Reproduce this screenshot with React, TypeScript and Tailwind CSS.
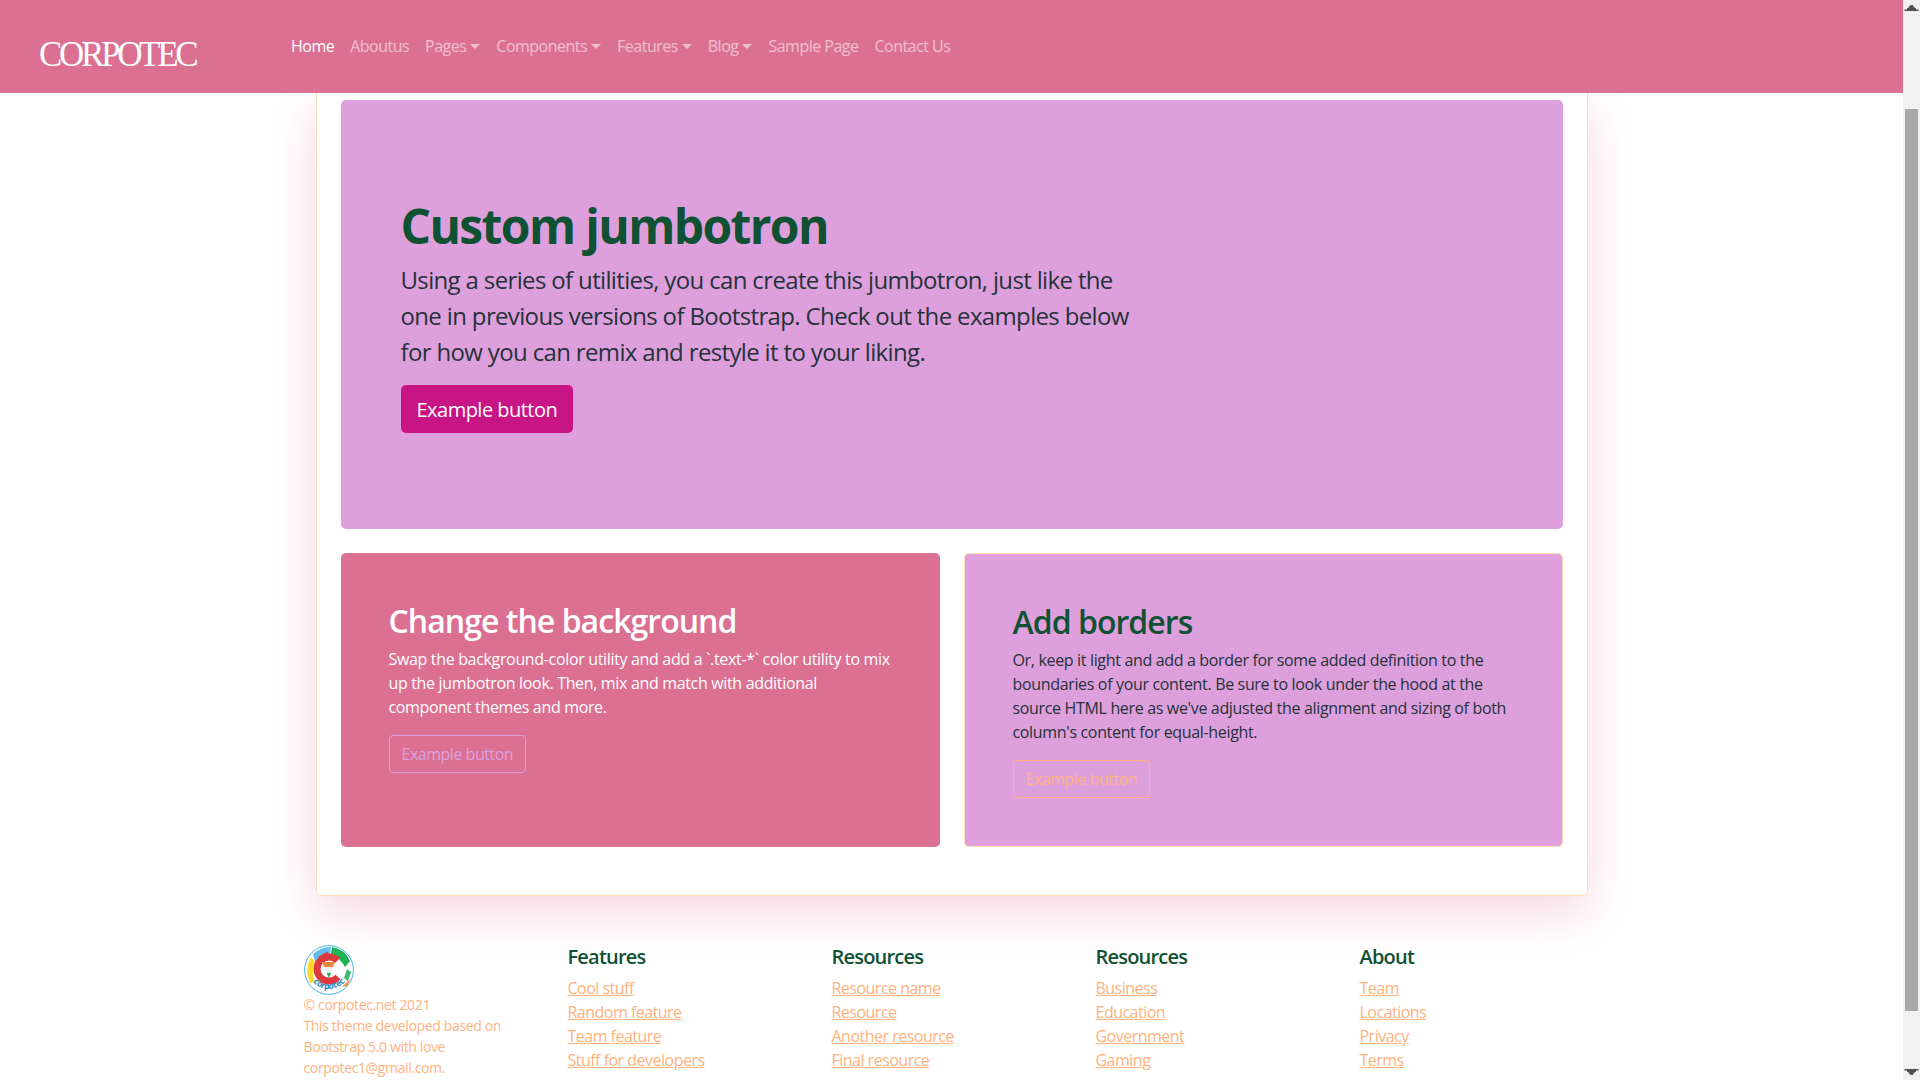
import React from "react";

const links = [
  ["Features", "Cool stuff", "Random feature", "Team feature", "Stuff for developers"],
  ["Resources", "Resource name", "Resource", "Another resource", "Final resource"],
  ["Resources", "Business", "Education", "Government", "Gaming"],
  ["About", "Team", "Locations", "Privacy", "Terms"],
];

function Caret() {
  return <span className="ml-[4px] inline-block align-[3px] border-x-[5px] border-t-[5px] border-x-transparent border-t-current" />;
}

function NavLink({ label, caret, active }: { label: string; caret?: boolean; active?: boolean }) {
  return (
    <a className={"px-2 py-2 leading-6 whitespace-nowrap " + (active ? "text-white" : "text-white/55")}>
      {label}
      {caret && <Caret />}
    </a>
  );
}

function Logo() {
  return (
    <svg width="50" height="50" viewBox="0 0 50 50" className="block">
      <defs>
        <path id="arc" d="M9 37 Q24 52 44 35" />
      </defs>
      <circle cx="25" cy="25" r="24.4" fill="#fff" stroke="#45b4e4" strokeWidth="1" />
      <path d="M9 9 Q17 2 27 2 L26 9 Q16 10 11 17 Z" fill="#62bdf0" />
      <path d="M7 12 Q0 24 6 38 L11 37 Q7 26 11 17 Z" fill="#fbd92e" />
      <path d="M28 2 Q41 4 46 16 L41 22 Q36 13 27 9 Z" fill="#1fb257" />
      <path d="M43 24 L47 27 L44 36 L40 33 Z" fill="#3dbb72" />
      <path d="M38 42 L47 33 L43 41 Z" fill="#ef8f3a" />
      <path d="M34 32 A12 12 0 1 1 33.5 15.5" fill="none" stroke="#dc3a3e" strokeWidth="7" />
      <path d="M15 13 L24 8" stroke="#dc3a3e" strokeWidth="3" />
      <path d="M18 17 H31 L25 33 Z" fill="#e8eef0" />
      <path d="M18 17 H31 L29 22 H20 Z" fill="#f0883a" />
      <path d="M22.5 28 H27 L25 33 Z" fill="#2aa85a" />
      <text fontSize="8.5" fontWeight="700" fill="#1f86c0" fontFamily="'Open Sans',sans-serif" letterSpacing="-0.2">
        <textPath href="#arc">corpotec</textPath>
      </text>
    </svg>
  );
}

function Arrow({ down }: { down?: boolean }) {
  return (
    <svg width="17" height="17" viewBox="0 0 17 17" className="block" fill="#505050">
      {down ? <path d="M1.5 6 H15.5 V7.5 H13 V9 H11.5 V10.5 H10 V12 H7 V10.5 H5.5 V9 H4 V7.5 H1.5 Z" /> : <path d="M1.5 11 H15.5 V9.5 H13 V8 H11.5 V6.5 H10 V5 H7 V6.5 H5.5 V8 H4 V9.5 H1.5 Z" />}
    </svg>
  );
}

export default function App() {
  return (
    <div className="flex h-screen w-full overflow-hidden bg-white font-['Open_Sans',sans-serif] text-[#253238] tracking-[-0.021em]">
      <div className="flex min-w-0 flex-1 flex-col overflow-hidden">
        <nav className="relative z-10 flex h-[93px] shrink-0 items-start bg-[#db7093] pl-[39px]">
          <div className="mt-[35px] w-[244px] shrink-0 font-['Liberation_Serif',serif] text-[35px] leading-10 tracking-[-0.095em] text-white">
            CORPOTEC
          </div>
          <div className="mt-[26px] flex text-[16px] tracking-[-0.032em]">
            <NavLink label="Home" active />
            <NavLink label="Aboutus" />
            <NavLink label="Pages" caret />
            <NavLink label="Components" caret />
            <NavLink label="Features" caret />
            <NavLink label="Blog" caret />
            <NavLink label="Sample Page" />
            <NavLink label="Contact Us" />
          </div>
        </nav>

        <main className="mx-auto w-[1272px] shrink-0">
          <div className="rounded-b-[5px] border border-t-0 border-[#ffdab9] bg-white px-6 pb-12 pt-[7px] shadow-[0_16px_48px_rgba(219,112,147,0.28)]">
            <section className="mb-6 rounded-[5px] bg-[#dda0dd] px-[60px] py-24">
              <h1 className="mt-px text-[48px] font-bold leading-[58px] tracking-[-0.034em] text-[#0f5132]">Custom jumbotron</h1>
              <p className="mb-[15px] mt-[7px] w-[744px] text-[24px] leading-9 tracking-[-0.027em]">
                Using a series of utilities, you can create this jumbotron, just like the one in previous versions of Bootstrap. Check out the examples below for how you can remix and restyle it to your liking.
              </p>
              <button className="h-12 rounded-[5px] bg-[#c71585] px-4 pt-px text-[20px] tracking-[-0.026em] text-white">Example button</button>
            </section>
            <div className="grid grid-cols-2 gap-6">
              <section className="h-[294px] rounded-[5px] bg-[#db7093] p-12 text-white">
                <h2 className="pt-px text-[32px] font-semibold leading-[37px] tracking-[-0.03em]">Change the background</h2>
                <p className="mb-4 mt-2 leading-6">
                  Swap the background-color utility and add a `.text-*` color utility to mix up the jumbotron look. Then, mix and match with additional component themes and more.
                </p>
                <button className="h-[38px] rounded-[4px] border border-[#dda0dd] px-3 tracking-[-0.03em] text-[#dda0dd]">Example button</button>
              </section>
              <section className="h-[294px] rounded-[5px] border border-[#ffdab9] bg-[#dda0dd] p-12">
                <h2 className="pt-px text-[32px] font-semibold leading-[37px] tracking-[-0.03em] text-[#0f5132]">Add borders</h2>
                <p className="mb-4 mt-2 leading-6">
                  Or, keep it light and add a border for some added definition to the boundaries of your content. Be sure to look under the hood at the source HTML here as we've adjusted the alignment and sizing of both column's content for equal-height.
                </p>
                <button className="h-[38px] rounded-[4px] border border-[#ffb27d] px-3 tracking-[-0.03em] text-[#ffb27d]">Example button</button>
              </section>
            </div>
          </div>
        </main>

        <footer className="mx-auto mt-[49px] grid w-[1320px] shrink-0 grid-cols-5 text-[#ffb27d]">
          <div className="px-3">
            <Logo />
            <small className="-mt-px block text-[14px] leading-[21px] tracking-[-0.026em]">
              © corpotec.net 2021
              <br />
              This theme developed based on Bootstrap 5.0 with love corpotec1@gmail.com.
            </small>
          </div>
          {links.map((col, i) => (
            <div key={i} className="px-3">
              <h5 className="mb-[7px] text-[20px] font-semibold leading-6 tracking-[-0.04em] text-[#0f5132]">{col[0]}</h5>
              <ul className="leading-6 tracking-[-0.032em]">
                {col.slice(1).map((l) => (
                  <li key={l}>
                    <a className="underline">{l}</a>
                  </li>
                ))}
              </ul>
            </div>
          ))}
        </footer>
      </div>

      <aside className="flex w-[17px] shrink-0 flex-col bg-[#f1f1f1]">
        <Arrow />
        <div className="ml-[2px] mt-[92px] h-[902px] w-[13px] bg-[#a8a8a8]" />
        <div className="mt-auto">
          <Arrow down />
        </div>
      </aside>
    </div>
  );
}
